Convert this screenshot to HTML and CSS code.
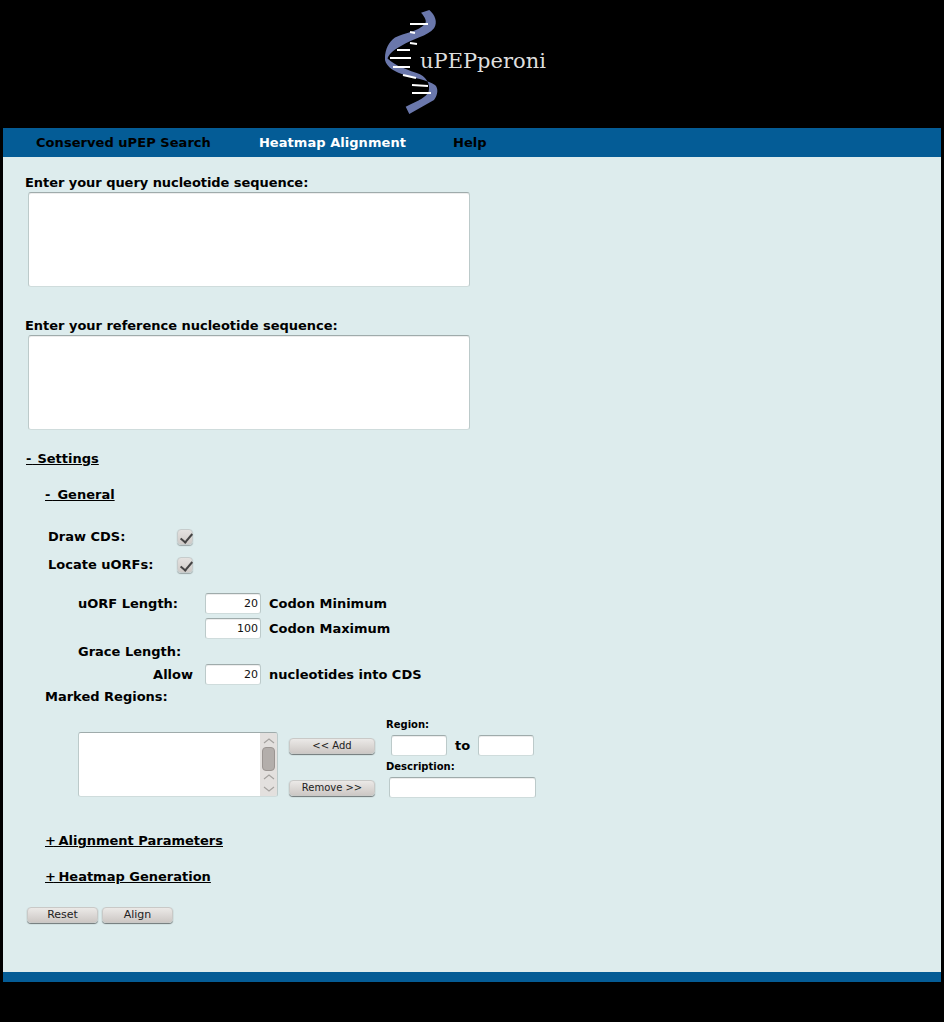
FILE: index.html
```html
<!DOCTYPE html>
<html lang="en">
<head>
<meta charset="utf-8">
<title>uPEPperoni</title>
<link rel="stylesheet" href="styles.css">
</head>
<body>
<header class="banner">
  <svg class="logo" width="224" height="128" viewBox="360 0 224 128" role="img" aria-label="uPEPperoni">
    <path class="helix" d="M421 12.7L429.3 10C435 15 438 22 434 28.3C428 36 412 39 401 46C392 51 388 55 387 60L385 58C385 49 389 42 395 37.5C404 33 418 31.5 425 24C427 21 425 17 421 12.7Z"/>
    <path class="helix" d="M385 56C392 64 402 68 416.7 73C426 76 431 84 428.5 92C426 97 420 100 405.7 106.7L409.3 114L434 100C438 95 438.5 88 435 85C431 82 427 81.5 423.3 80C405 75 388 72 385 60Z"/>
    <path class="rungs" d="M410 24H428M410 32L415 33M410 43L417 44M397 50H410M390 58H411M393 67H410M403 75L416 78M412 85L428 86M412 93H431"/>
    <text class="logo-text" x="420" y="68">uPEPperoni</text>
  </svg>
</header>
<div class="page">
  <nav class="nav">
    <a class="nav-item" href="#">Conserved uPEP Search</a>
    <a class="nav-item active" href="#">Heatmap Alignment</a>
    <a class="nav-item nav-help" href="#">Help</a>
  </nav>
  <main class="main">
    <label class="label label-seq" for="query">Enter your query nucleotide sequence:</label>
    <textarea class="field seq" id="query"></textarea>
    <label class="label label-ref" for="reference">Enter your reference nucleotide sequence:</label>
    <textarea class="field seq" id="reference"></textarea>

    <a class="toggle toggle-settings" href="#"><span class="sym">-</span> Settings</a>
    <a class="toggle toggle-sub toggle-general" href="#"><span class="sym">-</span> General</a>

    <div class="checks">
      <span class="label check-label">Draw CDS:</span>
      <input class="check" type="checkbox" checked aria-label="Draw CDS">
      <span class="label check-label check-label-low">Locate uORFs:</span>
      <input class="check check-low" type="checkbox" checked aria-label="Locate uORFs">
    </div>

    <div class="lengths">
      <span class="label">uORF Length:</span>
      <input class="field num" type="text" value="20" aria-label="Codon minimum">
      <span class="label unit">Codon Minimum</span>
      <span></span>
      <input class="field num" type="text" value="100" aria-label="Codon maximum">
      <span class="label unit">Codon Maximum</span>
      <span class="label grace">Grace Length:</span>
      <span class="label allow">Allow</span>
      <input class="field num" type="text" value="20" aria-label="Allowed nucleotides">
      <span class="label unit">nucleotides into CDS</span>
    </div>

    <div class="label marked-title">Marked Regions:</div>
    <div class="marked">
      <div class="listbox">
        <div class="list-body"></div>
        <div class="scrollbar">
          <svg class="arrow arrow-first" width="14" height="10" viewBox="0 0 14 10"><path d="M2 7L7 3L12 7"/></svg>
          <div class="thumb"></div>
          <svg class="arrow" width="14" height="10" viewBox="0 0 14 10"><path d="M2 7L7 3L12 7"/></svg>
          <svg class="arrow arrow-last" width="14" height="10" viewBox="0 0 14 10"><path d="M2 3L7 7L12 3"/></svg>
        </div>
      </div>
      <div class="marked-buttons">
        <button class="btn btn-wide" type="button">&lt;&lt; Add</button>
        <button class="btn btn-wide" type="button">Remove &gt;&gt;</button>
      </div>
      <div class="marked-fields">
        <div class="small-label">Region:</div>
        <div class="region-row">
          <input class="field region" type="text" aria-label="Region start">
          <span class="label to">to</span>
          <input class="field region" type="text" aria-label="Region end">
        </div>
        <div class="small-label desc-label">Description:</div>
        <input class="field desc" type="text" aria-label="Description">
      </div>
    </div>

    <a class="toggle toggle-sub toggle-align" href="#"><span class="plus">+</span> Alignment Parameters</a>
    <a class="toggle toggle-sub toggle-heat" href="#"><span class="plus">+</span> Heatmap Generation</a>

    <div class="actions">
      <button class="btn btn-action" type="button">Reset</button>
      <button class="btn btn-action" type="button">Align</button>
    </div>
  </main>
  <div class="footer"></div>
</div>
</body>
</html>
```
FILE: styles.css
```css
* { box-sizing: border-box; }
html, body { margin: 0; background: #000; }
body {
  min-height: 1022px;
  font-family: "DejaVu Sans", sans-serif;
  font-size: 13px;
  line-height: 16px;
  color: #000;
}
.banner { height: 128px; display: flex; justify-content: center; }
.logo { display: block; }
.helix { fill: #6a77ab; }
.rungs { fill: none; stroke: #fff; stroke-width: 2; }
.logo-text {
  font-family: "DejaVu Serif", serif;
  font-size: 21px;
  fill: #dedede;
}
.page { margin: 0 3px; }
.nav {
  height: 29px;
  background: #045c96;
  display: flex;
  align-items: center;
  padding-left: 33px;
  gap: 48px;
  letter-spacing: .05px;
}
.nav-item { color: #000; font-weight: bold; text-decoration: none; }
.nav-item.active { color: #fff; }
.nav-help { margin-left: -1px; }
.main {
  background: #ddeced;
  height: 815px;
  padding: 18px 0 0 22px;
}
.label { display: block; font-weight: bold; }
.label-seq { letter-spacing: -.05px; }
.label-ref { margin-top: 31px; letter-spacing: -.02px; }
.field {
  display: block;
  background: #fff;
  border: 1px solid #bccaca;
  border-top-color: #9fabab;
  border-bottom-color: #cfdcdc;
  border-radius: 3px;
  box-shadow: inset 0 1px 0 rgba(0, 0, 0, .07);
  padding: 0 2px;
  font-family: "DejaVu Sans", sans-serif;
  font-size: 11px;
  color: #111;
  outline: none;
}
.seq { width: 442px; height: 95px; margin: 1px 0 0 3px; resize: none; }
.toggle {
  display: block;
  width: max-content;
  color: #000;
  font-weight: bold;
  text-decoration: underline;
}
.sym { letter-spacing: 2.5px; }
.toggle-settings .sym { letter-spacing: 1.5px; }
.plus { letter-spacing: -2px; }
.toggle-settings { margin: 21px 0 0 1px; }
.toggle-sub { margin-left: 20px; }
.toggle-general { margin-top: 20px; }
.toggle-align { margin-top: 35px; }
.toggle-heat { margin-top: 20px; }
.checks {
  display: grid;
  grid-template-columns: 129px 16px;
  grid-template-rows: 27px 27px;
  align-items: start;
  margin: 20px 0 0 23px;
}
.check-label { margin-top: 6px; }
.check-label-low { margin-top: 7px; }
.check {
  appearance: none;
  position: relative;
  width: 16px;
  height: 16px;
  margin: 6px 0 0;
  border: 1px solid #c6cccc;
  border-radius: 4px;
  background: linear-gradient(#e4e2e0, #cfcbc8);
  box-shadow: 0 1px 1px rgba(0, 0, 0, .3);
}
.check-low { margin-top: 7px; }
.check::after {
  content: "";
  position: absolute;
  left: 5px;
  top: 1px;
  width: 5px;
  height: 10px;
  border: solid #444;
  border-width: 0 2px 2px 0;
  transform: rotate(40deg);
}
.lengths {
  display: grid;
  grid-template-columns: 127px 56px auto;
  grid-template-rows: 25px 25px 21px 25px;
  align-items: center;
  justify-content: start;
  margin: 14px 0 0 53px;
}
.num { width: 56px; height: 21px; text-align: right; }
.unit { margin-left: 8px; }
.grace { grid-column: 1 / -1; }
.allow { text-align: right; padding-right: 12px; }
.marked-title { margin: 2px 0 0 20px; }
.marked { display: flex; align-items: flex-start; margin: 13px 0 0 53px; }
.listbox {
  display: flex;
  width: 200px;
  height: 65px;
  margin-top: 14px;
  border: 1px solid #bccaca;
  border-top-color: #9fabab;
  border-bottom-color: #cfdcdc;
  border-radius: 3px;
  overflow: hidden;
}
.list-body { flex: 1; background: #fff; }
.scrollbar {
  width: 17px;
  background: #e3e0de;
  display: flex;
  flex-direction: column;
  align-items: center;
}
.arrow { display: block; flex: none; margin-top: 1px; }
.arrow-first { margin-top: 3px; }
.arrow-last { margin-top: 2px; }
.arrow path { fill: none; stroke: #a5a29f; stroke-width: 1.2; }
.thumb {
  width: 13px;
  height: 24px;
  flex: none;
  margin-top: 1px;
  border: 1px solid #9b9592;
  border-radius: 4px;
  background: #b3aeab;
}
.marked-buttons {
  display: flex;
  flex-direction: column;
  gap: 26px;
  margin: 20px 0 0 11px;
}
.btn {
  display: block;
  height: 16px;
  padding: 0;
  border: 1px solid #c9c9c7;
  border-radius: 4px;
  background: linear-gradient(#ebe9e7, #cdc8c5);
  box-shadow: 0 1px 1px rgba(0, 0, 0, .5);
  font-family: "DejaVu Sans", sans-serif;
  font-size: 11px;
  line-height: 14px;
  color: #222;
}
.btn-wide { width: 86px; font-size: 10px; }
.marked-fields { margin-left: 11px; }
.small-label { font-size: 10px; font-weight: bold; line-height: 14px; }
.region-row { display: flex; align-items: center; margin: 3px 0 0 5px; }
.region { width: 56px; height: 21px; }
.to { width: 31px; text-align: center; }
.desc-label { margin-top: 4px; }
.desc { width: 147px; height: 21px; margin: 3px 0 0 3px; }
.actions { display: flex; gap: 4px; margin: 22px 0 0 2px; }
.btn-action { width: 71px; }
.footer { height: 10px; background: #045c96; }
```
